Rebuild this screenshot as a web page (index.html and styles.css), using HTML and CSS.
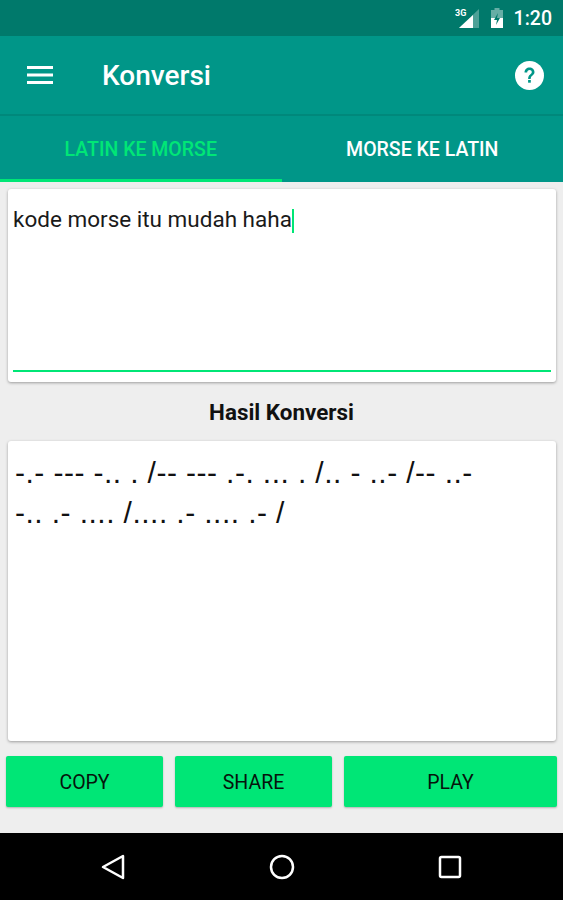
FILE: index.html
```html
<!DOCTYPE html>
<html lang="en">
<head>
    <meta charset="UTF-8">
    <meta name="viewport" content="width=device-width, initial-scale=1.0">
    <title>Konversi</title>
    <link rel="stylesheet" href="styles.css">
</head>
<body>
    <div class="app">
        <div class="statusbar">
            <svg class="signal" width="24" height="22" viewBox="0 0 24 22">
                <path d="M24 2V21H4z" fill="#fff" fill-opacity="0.3"/>
                <path d="M18 8V21H4z" fill="#fff"/>
                <text x="0" y="9" class="signal-label">3G</text>
            </svg>
            <svg class="battery" width="14" height="22" viewBox="0 0 14 22">
                <path d="M4.500 1h5v2h3.500v18H1V3h3.500z" fill="#fff" fill-opacity="0.4"/>
                <path d="M1 11h12v10H1z" fill="#fff"/>
                <path d="M8 6 4 13h3l-1 5 4-7H7z" fill="#00796b"/>
            </svg>
            <span class="clock">1:20</span>
        </div>

        <div class="toolbar">
            <svg class="menu" width="26" height="20" viewBox="0 0 26 20">
                <path d="M0 1h26v3H0zM0 8.500h26v3H0zM0 16h26v3H0z" fill="#fff"/>
            </svg>
            <h1 class="title">Konversi</h1>
            <svg class="help" width="29" height="29" viewBox="0 0 29 29">
                <circle cx="14.500" cy="14.500" r="14.500" fill="#fff"/>
                <path d="M9.500 11.500c0-3 2.200-5 5-5s5 2 5 4.600c0 3.400-3.800 3.500-3.800 6.900h-2.600c0-4.500 3.700-4.500 3.700-6.900 0-1.300-1-2.200-2.300-2.200s-2.300 1-2.300 2.600z" fill="#009688"/>
                <rect x="13.100" y="19" width="2.700" height="2.700" fill="#009688"/>
            </svg>
        </div>

        <div class="tabs">
            <div class="tab active">LATIN KE MORSE</div>
            <div class="tab">MORSE KE LATIN</div>
        </div>

        <main class="content">
            <div class="card input-card">
                <div class="input-text">kode morse itu mudah haha<span class="caret"></span></div>
                <div class="underline"></div>
            </div>

            <div class="result-label">Hasil Konversi</div>

            <div class="card result-card">-.- --- -.. . /-- --- .-. ... . /.. - ..- /-- ..-<br>-.. .- .... /.... .- .... .- /</div>

            <div class="buttons">
                <button class="btn btn-copy">COPY</button>
                <button class="btn btn-share">SHARE</button>
                <button class="btn btn-play">PLAY</button>
            </div>
        </main>

        <div class="navbar">
            <svg width="26" height="28" viewBox="0 0 26 28">
                <path d="M23 3V25L3 14z" fill="none" stroke="#fff" stroke-width="2.500" stroke-linejoin="round"/>
            </svg>
            <svg width="26" height="26" viewBox="0 0 26 26">
                <circle cx="13" cy="13" r="11" fill="none" stroke="#fff" stroke-width="2.500"/>
            </svg>
            <svg width="24" height="24" viewBox="0 0 24 24">
                <rect x="2" y="2" width="20" height="20" rx="1.500" fill="none" stroke="#fff" stroke-width="2.500"/>
            </svg>
        </div>
    </div>
</body>
</html>
```

FILE: styles.css
```css
html, body {
    margin: 0;
    padding: 0;
}
body {
    font-family: Roboto, "Liberation Sans", sans-serif;
    background-color: #eeeeee;
}
.app {
    display: flex;
    flex-direction: column;
    width: 563px;
    height: 900px;
    overflow: hidden;
}

/* status bar */
.statusbar {
    display: flex;
    align-items: center;
    justify-content: flex-end;
    height: 36px;
    padding-right: 11px;
    background-color: #00796b;
    color: white;
}
.signal {
    margin-right: 11px;
}
.signal-label {
    font-size: 9px;
    font-weight: 700;
    fill: #fff;
}
.battery {
    margin-right: 10px;
}
.clock {
    font-size: 19.500px;
    font-weight: 500;
}

/* toolbar */
.toolbar {
    display: flex;
    align-items: center;
    height: 78px;
    padding: 0 19px 0 27px;
    background-color: #009688;
    border-bottom: 2px solid #00887b;
}
.title {
    flex: 1;
    margin: 0 0 0 49px;
    font-size: 28px;
    font-weight: 500;
    color: white;
}

/* tabs */
.tabs {
    display: flex;
    height: 66px;
    background-color: #009688;
}
.tab {
    display: flex;
    align-items: center;
    justify-content: center;
    box-sizing: border-box;
    width: 50%;
    font-size: 19.500px;
    font-weight: 500;
    color: white;
}
.tab.active {
    padding-top: 3px;
    color: #00e676;
    border-bottom: 3px solid #00e676;
}

/* content */
.content {
    flex: 1;
    display: flex;
    flex-direction: column;
    padding: 7px 6px 0;
}
.card {
    margin: 0 1px 0 2px;
    background-color: white;
    border-radius: 3px;
    box-shadow: 0 1px 3px rgba(0, 0, 0, 0.35);
}
.input-card {
    display: flex;
    flex-direction: column;
    justify-content: space-between;
    height: 193px;
    padding: 17px 5px 10px;
    box-sizing: border-box;
}
.input-text {
    font-size: 22.500px;
    line-height: 26px;
    color: #1a1a1a;
}
.caret {
    display: inline-block;
    width: 2px;
    height: 24px;
    vertical-align: -6px;
    background-color: #00e676;
}
.underline {
    height: 2px;
    background-color: #00e676;
}
.result-label {
    height: 59px;
    line-height: 61px;
    text-align: center;
    font-size: 22.400px;
    font-weight: 700;
    color: #111111;
}
.result-card {
    height: 300px;
    padding: 12px 7px;
    box-sizing: border-box;
    font-family: "Liberation Sans", sans-serif;
    font-size: 30px;
    line-height: 40px;
    letter-spacing: 0.500px;
    word-spacing: -0.250px;
    color: #111111;
}

/* buttons */
.buttons {
    display: flex;
    gap: 12px;
    margin-top: 15px;
}
.btn {
    height: 51px;
    padding: 2px 0 0;
    border: none;
    border-radius: 2px;
    background-color: #00e676;
    box-shadow: 0 1px 2px rgba(0, 0, 0, 0.25);
    font-family: inherit;
    font-size: 19.500px;
    font-weight: 400;
    color: #06140c;
}
.btn-copy, .btn-share {
    width: 157px;
}
.btn-play {
    width: 213px;
}

/* nav bar */
.navbar {
    display: flex;
    align-items: center;
    gap: 143px;
    box-sizing: border-box;
    height: 67px;
    padding-left: 100px;
    background-color: black;
}
```
